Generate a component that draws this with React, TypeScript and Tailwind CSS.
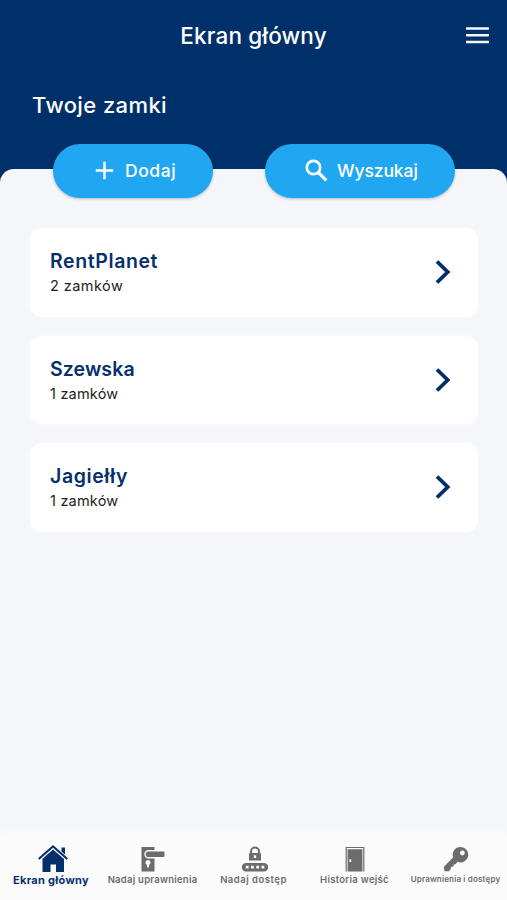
import { ReactNode } from 'react';

type Group = { name: string; count: number; nameClass: string; countClass: string };

const groups: Group[] = [
  { name: 'RentPlanet', count: 2, nameClass: 'tracking-[0.6px]', countClass: 'tracking-[0.45px]' },
  { name: 'Szewska', count: 1, nameClass: 'tracking-[0.1px]', countClass: 'tracking-[0.2px]' },
  { name: 'Jagiełły', count: 1, nameClass: 'tracking-[0.6px]', countClass: 'tracking-[0.2px]' },
];

const HomeIcon = () => (
  <svg width="30" height="27" viewBox="0 0 30 27" fill="currentColor">
    <path d="M15 0 30 13.2 28.6 14.8 15 2.8 1.4 14.8 0 13.2Z" />
    <path d="M23.5 2.5H27V9.5L23.5 6.4Z" />
    <path d="M15 4.4 26 14V27H18V19.5H12.5V27H4.5V13.7Z" />
  </svg>
);

const HandleIcon = () => (
  <svg width="24" height="26" viewBox="0 0 24 26" fill="currentColor">
    <path
      fillRule="evenodd"
      d="M0.5 1H13.5V4H7.5A4.2 4.2 0 0 0 7.5 12.4H13.5V25.5H0.5ZM7 14A2.5 2.5 0 0 0 5.8 18.7L6.2 21.5H7.8L8.2 18.7A2.5 2.5 0 0 0 7 14Z"
    />
    <path d="M7.5 5.4H22.5A1 1 0 0 1 23.5 6.4V10A1 1 0 0 1 22.5 11H7.5A2.8 2.8 0 0 1 7.5 5.4Z" />
  </svg>
);

const CodeIcon = () => (
  <svg width="28" height="26" viewBox="0 0 28 26" fill="currentColor">
    <path d="M10 8V5.5A4 4 0 0 1 18 5.5V8" fill="none" stroke="currentColor" strokeWidth="2" />
    <path
      fillRule="evenodd"
      d="M9 7H19A1 1 0 0 1 20 8V14.5H8V8A1 1 0 0 1 9 7ZM12.8 9.2V12H15.2V9.2Z"
    />
    <path
      fillRule="evenodd"
      d="M5 17H23A4.2 4.2 0 0 1 23 25.4H5A4.2 4.2 0 0 1 5 17ZM4.8 19.8V22.6H7.6V19.8ZM10 19.8V22.6H12.8V19.8ZM15.3 19.8V22.6H18.1V19.8ZM20.5 19.8V22.6H23.3V19.8Z"
    />
  </svg>
);

const DoorIcon = () => (
  <svg width="20" height="26" viewBox="0 0 20 26" fill="currentColor">
    <path d="M1.2 25.5V1.5H18.8V25.5" fill="none" stroke="currentColor" strokeWidth="1.2" />
    <path fillRule="evenodd" d="M2.6 3.3H17.4V25.5H2.6ZM4.4 13.2V16H6.2V13.2Z" />
  </svg>
);

const KeyIcon = () => (
  <svg width="26" height="26" viewBox="0 0 26 26" fill="currentColor">
    <path
      fillRule="evenodd"
      d="M17.5 1A7.7 7.7 0 1 1 14.6 15.8L12.5 18.2 10.8 18.4 10.4 20.4 8.3 20.8 7.5 23.4 5.8 25.3H1.5L0.8 21 10.1 11.2A7.7 7.7 0 0 1 17.5 1ZM19.4 4.6A2.4 2.4 0 1 0 19.4 9.4 2.4 2.4 0 0 0 19.4 4.6Z"
    />
  </svg>
);

type TabProps = { icon: ReactNode; label: string; className: string; labelClass: string };

function Tab({ icon, label, className, labelClass }: TabProps) {
  return (
    <button className={`flex flex-col items-center pt-[11px] whitespace-nowrap ${className}`}>
      <span className="flex h-[29px] items-end pb-[1px]">{icon}</span>
      <span className={`h-[14px] ${labelClass}`}>{label}</span>
    </button>
  );
}

function GroupCard({ name, count, nameClass, countClass }: Group) {
  return (
    <button className="flex h-[88.5px] w-full items-center justify-between rounded-[12px] bg-white pr-[27px] pl-[20px] text-left shadow-[0_0_6px_rgba(255,255,255,0.5)]">
      <span className="flex flex-col pt-[1.5px]">
        <span className={`text-[19.5px] leading-[26px] font-semibold text-[#06306c] ${nameClass}`}>{name}</span>
        <span className={`text-[14.5px] leading-[24px] text-[#222222] ${countClass}`}>{count} zamków</span>
      </span>
      <svg width="16" height="24" viewBox="0 0 16 24" fill="none" stroke="#002e69" strokeWidth="3.8">
        <path d="M2 1.5 12.7 12 2 22.5" />
      </svg>
    </button>
  );
}

export default function App() {
  return (
    <div className="flex h-[900px] w-[507px] flex-col overflow-hidden bg-[#003069] font-['Inter',sans-serif]">
      <header className="grid h-[71px] shrink-0 grid-cols-[1fr_auto_1fr] items-center pr-[18px] text-white">
        <span />
        <h1 className="pl-[18px] text-[22.5px] font-medium tracking-[0.15px]">Ekran główny</h1>
        <button className="justify-self-end" aria-label="Menu">
          <svg width="23" height="17" viewBox="0 0 23 17" stroke="#f4f7ff" strokeWidth="2.4">
            <path d="M0 1.5H23M0 8.3H23M0 15H23" />
          </svg>
        </button>
      </header>

      <h2 className="h-[98px] shrink-0 pt-[18px] pl-[32px] text-[22px] leading-[32px] font-medium tracking-[0.4px] text-white">
        Twoje zamki
      </h2>

      <main className="flex flex-1 flex-col rounded-t-[14px] bg-[#f4f6fa]">
        <div className="-mt-[25px] flex justify-between pr-[52px] pl-[53px] text-[17.5px] font-medium text-white">
          <button className="flex h-[53.5px] w-[160px] items-center rounded-full bg-[#21a7f1] pl-[42px] shadow-[0_1px_3px_rgba(0,0,0,0.25)]">
            <svg width="19" height="19" viewBox="0 0 19 19" stroke="white" strokeWidth="2.4">
              <path d="M9.5 0.8V18.2M0.8 9.5H18.2" />
            </svg>
            <span className="ml-[11px] tracking-[0.55px]">Dodaj</span>
          </button>
          <button className="flex h-[53.5px] w-[190px] items-center rounded-full bg-[#21a7f1] pl-[40px] shadow-[0_1px_3px_rgba(0,0,0,0.25)]">
            <svg width="23" height="23" viewBox="0 0 23 23" fill="none" stroke="white" strokeWidth="2.7">
              <circle cx="8.5" cy="8.5" r="6.7" />
              <path d="M13.2 13.3 21.3 21.3" strokeWidth="3.2" />
            </svg>
            <span className="ml-[9px] tracking-[-0.1px]">Wyszukaj</span>
          </button>
        </div>

        <div className="mt-[30.5px] flex flex-col gap-[19px] pr-[29px] pl-[30px]">
          {groups.map((group) => (
            <GroupCard key={group.name} {...group} />
          ))}
        </div>
      </main>

      <nav className="flex h-[67px] shrink-0 bg-[#fbfbfc] text-[#6c6c6c] shadow-[0_-1px_3px_rgba(255,255,255,0.6)]">
        <Tab
          icon={<HomeIcon />}
          label="Ekran główny"
          className="w-[102px] pl-[3px] text-[#06306c]"
          labelClass="-ml-[3px] text-[11px] leading-[14px] font-bold tracking-[0.3px]"
        />
        <Tab
          icon={<HandleIcon />}
          label="Nadaj uprawnienia"
          className="w-[101px]"
          labelClass="text-[9.5px] leading-[14px] font-semibold tracking-[0.25px]"
        />
        <Tab
          icon={<CodeIcon />}
          label="Nadaj dostęp"
          className="w-[102px] pl-[1px]"
          labelClass="-ml-[2px] text-[9.5px] leading-[14px] font-semibold tracking-[0.5px]"
        />
        <Tab
          icon={<DoorIcon />}
          label="Historia wejść"
          className="w-[99px]"
          labelClass="text-[9.5px] leading-[14px] font-semibold tracking-[0.3px]"
        />
        <Tab
          icon={<KeyIcon />}
          label="Uprawnienia i dostępy"
          className="w-[103px]"
          labelClass="text-[8px] leading-[13px] font-semibold tracking-[0.17px]"
        />
      </nav>
    </div>
  );
}
